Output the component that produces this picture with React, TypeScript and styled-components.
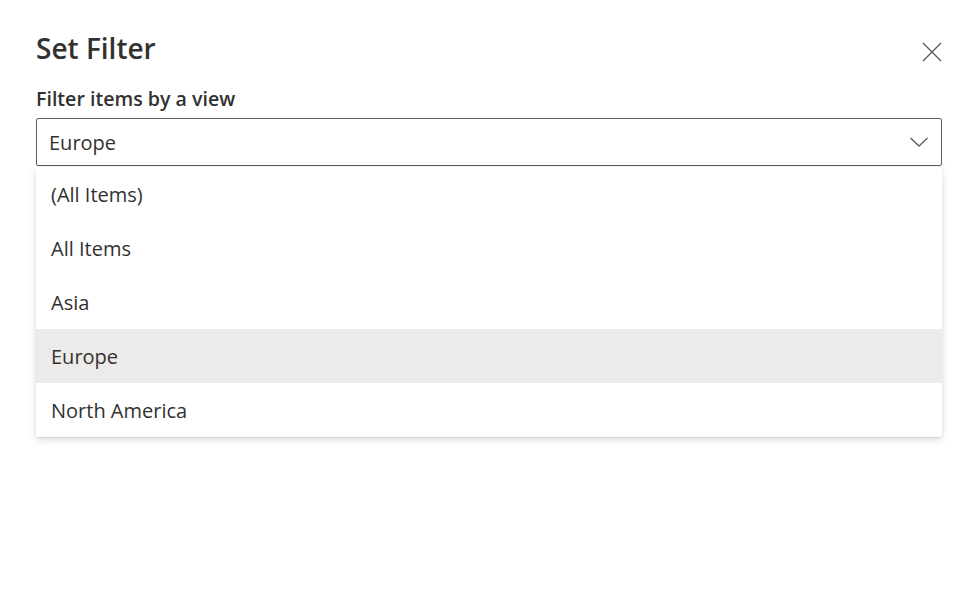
import React from "react";
import styled, { createGlobalStyle } from "styled-components";

const Global = createGlobalStyle`
  html, body { margin: 0; padding: 0; background: #fff; }
  body { font-family: "Open Sans", "Noto Sans", sans-serif; color: #323130; }
`;

const Panel = styled.div`
  width: 977px;
  height: 605px;
  box-sizing: border-box;
  padding: 29px 35px 0 36px;
  display: flex;
  flex-direction: column;
`;

const Header = styled.div`
  display: flex;
  justify-content: space-between;
  align-items: flex-start;
`;

const Title = styled.h1`
  margin: 0;
  font-size: 28px;
  font-weight: 600;
  line-height: 38px;
  color: #323130;
`;

const CloseButton = styled.button`
  border: none;
  background: none;
  padding: 0;
  margin-top: 13px;
  width: 20px;
  height: 20px;
  display: flex;
  color: #605e5c;
`;

const Label = styled.div`
  margin-top: 19px;
  font-size: 19.6px;
  font-weight: 600;
  line-height: 26px;
  color: #323130;
`;

const Field = styled.div`
  position: relative;
  margin-top: 6px;
`;

const Select = styled.div`
  height: 48px;
  box-sizing: border-box;
  border: 1px solid #605e5c;
  border-radius: 2px;
  display: flex;
  align-items: center;
  justify-content: space-between;
  padding: 0 12px 0 12px;
  font-size: 20px;
`;

const Menu = styled.div`
  position: absolute;
  left: 0;
  right: 0;
  top: 49px;
  background: rgba(255, 255, 255, 0.985);
  box-shadow: 0 3px 8px rgba(0, 0, 0, 0.13), 0 0.5px 2px rgba(0, 0, 0, 0.1);
  border-radius: 2px;
  z-index: 2;
`;

const Option = styled.div<{ $selected?: boolean }>`
  height: 54px;
  display: flex;
  align-items: center;
  padding-left: 15px;
  font-size: 20px;
  color: #323130;
  background: ${(p) => (p.$selected ? "#edebe9" : "transparent")};
`;

const Behind = styled.div`
  padding-top: 14px;
  display: flex;
  flex-direction: column;
  gap: 14px;
  opacity: 0.04;
`;

const GhostRow = styled.div`
  display: flex;
  align-items: center;
  gap: 12px;
  font-size: 20px;
`;

const Box = styled.span`
  width: 20px;
  height: 20px;
  border: 1px solid #323130;
  border-radius: 2px;
`;

const GhostHeading = styled.div`
  font-size: 20px;
  font-weight: 600;
`;

const Indent = styled.div`
  padding-left: 36px;
  display: flex;
  flex-direction: column;
  gap: 12px;
`;

const options = ["(All Items)", "All Items", "Asia", "Europe", "North America"];

export default function App() {
  return (
    <>
      <Global />
      <Panel>
        <Header>
          <Title>Set Filter</Title>
          <CloseButton aria-label="Close">
            <svg width="20" height="20" viewBox="0 0 20 20">
              <path d="M1 1 L19 19 M19 1 L1 19" stroke="#605e5c" strokeWidth="1.4" fill="none" />
            </svg>
          </CloseButton>
        </Header>
        <Label>Filter items by a view</Label>
        <Field>
          <Select>
            <span>Europe</span>
            <svg width="20" height="12" viewBox="0 0 20 12">
              <path d="M1.5 2 L10 10 L18.5 2" stroke="#605e5c" strokeWidth="1.3" fill="none" />
            </svg>
          </Select>
          <Menu>
            {options.map((o) => (
              <Option key={o} $selected={o === "Europe"}>
                {o}
              </Option>
            ))}
          </Menu>
          <Behind>
            <GhostRow>
              <Box />
              <span>Use the selected view to Filter</span>
            </GhostRow>
            <GhostHeading>Add filters to filter items using columns</GhostHeading>
            <Indent>
              <GhostRow><Box />Title</GhostRow>
              <GhostRow><Box />Country</GhostRow>
              <GhostRow><Box />City</GhostRow>
            </Indent>
          </Behind>
        </Field>
      </Panel>
    </>
  );
}
